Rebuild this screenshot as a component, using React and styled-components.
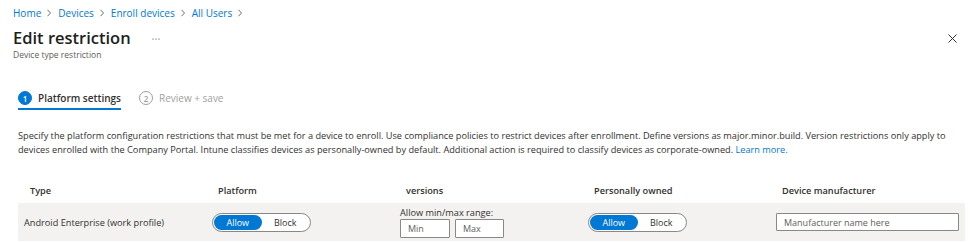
import React from 'react';
import styled, { createGlobalStyle } from 'styled-components';

const GlobalStyle = createGlobalStyle`
    body {
        margin: 0;
        background: #ffffff;
        font-family: "Segoe UI", "Open Sans", "Noto Sans", sans-serif;
        color: #323130;
    }
`;

const crumbs = ['Home', 'Devices', 'Enroll devices', 'All Users'];

const columns = ['Type', 'Platform', 'versions', 'Personally owned', 'Device manufacturer'];

function Toggle({ value }) {
    return (
        <S.Toggle>
            <S.ToggleOption $active={value === 'allow'}>Allow</S.ToggleOption>
            <S.ToggleOption $active={value === 'block'}>Block</S.ToggleOption>
        </S.Toggle>
    );
}

export default function App() {
    return (
        <S.Page>
            <GlobalStyle />
            <S.Header>
                <S.Breadcrumb>
                    {crumbs.map(c => (
                        <React.Fragment key={c}>
                            <a>{c}</a>
                            <S.Chevron viewBox="0 0 8 8">
                                <path d="M2.5 0.8 L5.5 4 L2.5 7.2" />
                            </S.Chevron>
                        </React.Fragment>
                    ))}
                </S.Breadcrumb>
                <S.TitleRow>
                    <h1>Edit restriction</h1>
                    <S.More viewBox="0 0 8 2">
                        <circle cx="1" cy="1" r="0.6" />
                        <circle cx="4" cy="1" r="0.6" />
                        <circle cx="7" cy="1" r="0.6" />
                    </S.More>
                </S.TitleRow>
                <S.Subtitle>Device type restriction</S.Subtitle>
                <S.Close viewBox="0 0 9 9">
                    <path d="M0.5 0.5 L8.5 8.5 M8.5 0.5 L0.5 8.5" />
                </S.Close>
            </S.Header>

            <S.Content>
                <S.Steps>
                    <S.Step $active>
                        <S.StepNumber $active>1</S.StepNumber>
                        Platform settings
                    </S.Step>
                    <S.Step>
                        <S.StepNumber>2</S.StepNumber>
                        Review + save
                    </S.Step>
                </S.Steps>

                <S.Description>
                    Specify the platform configuration restrictions that must be met for a device to enroll. Use compliance policies to restrict devices after enrollment. Define versions as major.minor.build. Version restrictions only apply to devices enrolled with the Company Portal. Intune classifies devices as personally-owned by default. Additional action is required to classify devices as corporate-owned. <a>Learn more.</a>
                </S.Description>

                <S.Table>
                    {columns.map(c => (
                        <S.HeadCell key={c}>{c}</S.HeadCell>
                    ))}
                    <S.Cell>Android Enterprise (work profile)</S.Cell>
                    <S.Cell>
                        <Toggle value="allow" />
                    </S.Cell>
                    <S.Cell>
                        <S.Versions>
                            <span>Allow min/max range:</span>
                            <S.VersionInputs>
                                <S.Input $width={50} placeholder="Min" />
                                <S.Input $width={49} placeholder="Max" />
                            </S.VersionInputs>
                        </S.Versions>
                    </S.Cell>
                    <S.Cell>
                        <Toggle value="allow" />
                    </S.Cell>
                    <S.Cell>
                        <S.Input placeholder="Manufacturer name here" />
                    </S.Cell>
                </S.Table>
            </S.Content>
        </S.Page>
    );
}

const S = {
    Page: styled.div`
        width: 975px;
        height: 242px;
        overflow: hidden;
    `,
    Header: styled.header`
        position: relative;
        padding: 4px 12px 0 13px;
    `,
    Breadcrumb: styled.nav`
        display: flex;
        align-items: center;
        height: 18px;
        font-size: 10px;

        a {
            color: #0078d4;
        }
    `,
    Chevron: styled.svg`
        width: 8px;
        height: 8px;
        margin: 0 5px 0 4px;
        fill: none;
        stroke: #605e5c;
        stroke-width: 0.9;
    `,
    TitleRow: styled.div`
        display: flex;
        align-items: center;
        height: 22px;
        margin-top: 4px;

        h1 {
            margin: 0;
            font-size: 16.5px;
            font-weight: 600;
            color: #201f1e;
        }
    `,
    More: styled.svg`
        width: 8px;
        height: 2px;
        margin-left: 21px;
        margin-top: 3px;
        fill: #323130;
    `,
    Subtitle: styled.div`
        margin-top: 1px;
        font-size: 8.5px;
        line-height: 12px;
        color: #605e5c;
    `,
    Close: styled.svg`
        position: absolute;
        right: 18px;
        top: 34px;
        width: 9px;
        height: 9px;
        fill: none;
        stroke: #323130;
        stroke-width: 1;
    `,
    Content: styled.main`
        padding: 0 10px 0 18px;
    `,
    Steps: styled.div`
        display: flex;
        gap: 18px;
        margin-top: 27px;
    `,
    Step: styled.div`
        display: flex;
        align-items: center;
        gap: 6px;
        height: 20px;
        font-size: 10px;
        font-weight: ${p => (p.$active ? 600 : 400)};
        color: ${p => (p.$active ? '#323130' : '#a19f9d')};
        border-bottom: 2px solid ${p => (p.$active ? '#0078d4' : 'transparent')};
    `,
    StepNumber: styled.span`
        display: flex;
        align-items: center;
        justify-content: center;
        box-sizing: border-box;
        width: 14px;
        height: 14px;
        border-radius: 50%;
        font-size: 8px;
        font-weight: 600;
        background: ${p => (p.$active ? '#0078d4' : '#ffffff')};
        color: ${p => (p.$active ? '#ffffff' : '#a19f9d')};
        border: 1px solid ${p => (p.$active ? '#0078d4' : '#a19f9d')};
    `,
    Description: styled.p`
        margin: 19px 0 0 0;
        width: 935px;
        font-size: 9.2px;
        line-height: 14px;
        color: #323130;

        a {
            color: #0078d4;
        }
    `,
    Table: styled.div`
        display: grid;
        grid-template-columns: 188px 188px 188px 188px 195px;
        margin-top: 20px;
        font-size: 9.2px;
    `,
    HeadCell: styled.div`
        display: flex;
        align-items: center;
        height: 26px;
        padding-left: 12px;
        font-weight: 600;
    `,
    Cell: styled.div`
        display: flex;
        align-items: center;
        height: 38px;
        padding: 0 6px;
        background: #f3f2f1;
    `,
    Toggle: styled.div`
        display: flex;
        align-items: center;
        box-sizing: border-box;
        width: 99px;
        height: 19px;
        padding: 1px;
        border: 1px solid #8a8886;
        border-radius: 10px;
        background: #ffffff;
    `,
    ToggleOption: styled.span`
        display: flex;
        align-items: center;
        justify-content: center;
        width: 48px;
        height: 15px;
        border-radius: 8px;
        font-size: 9px;
        background: ${p => (p.$active ? '#0078d4' : 'transparent')};
        color: ${p => (p.$active ? '#ffffff' : '#323130')};
    `,
    Versions: styled.div`
        display: flex;
        flex-direction: column;
        line-height: 12px;
    `,
    VersionInputs: styled.div`
        display: flex;
        gap: 5px;
    `,
    Input: styled.input`
        box-sizing: border-box;
        width: ${p => (p.$width ? `${p.$width}px` : '100%')};
        height: ${p => (p.$width ? '19px' : '18px')};
        padding: 0 7px;
        border: 1px solid #8a8886;
        border-radius: 1px;
        background: #ffffff;
        font-family: inherit;
        font-size: 9px;
        color: #323130;

        &::placeholder {
            color: #605e5c;
        }
    `
};
